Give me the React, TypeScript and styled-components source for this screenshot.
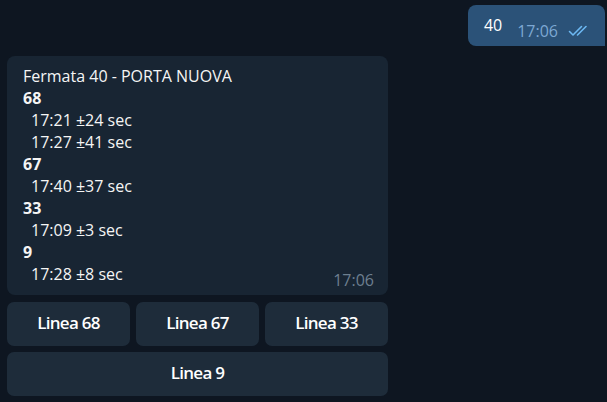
import React from "react";
import styled, { createGlobalStyle } from "styled-components";

const Global = createGlobalStyle`
  html, body { margin: 0; padding: 0; background: #0e1621; }
  body { font-family: "Open Sans", "Noto Sans", sans-serif; color: #f5f5f5; }
`;

const Page = styled.div`
  width: 607px;
  height: 402px;
  overflow: hidden;
  display: flex;
  flex-direction: column;
  padding-top: 5px;
  box-sizing: border-box;
`;

const OutRow = styled.div`
  display: flex;
  justify-content: flex-end;
  padding-right: 2px;
`;

const OutBubble = styled.div`
  background: #2b5278;
  border-radius: 8px 8px 0 8px;
  height: 41px;
  box-sizing: border-box;
  padding: 0 14px 0 16px;
  display: flex;
  align-items: center;
  gap: 15px;
`;

const OutText = styled.span`
  font-size: 16px;
  color: #ffffff;
  margin-top: -2px;
`;

const OutMeta = styled.span`
  display: flex;
  align-items: center;
  gap: 10px;
  font-size: 16px;
  color: #7da8d3;
  margin-top: 10px;
`;

const InBlock = styled.div`
  width: 381px;
  margin: 10px 0 0 7px;
  display: flex;
  flex-direction: column;
  gap: 7px;
`;

const InBubble = styled.div`
  background: #182533;
  border-radius: 8px;
  padding: 9px 14px 10px 16px;
  font-size: 16px;
  line-height: 22px;
  color: #f5f5f5;
`;

const Line = styled.div<{ $bold?: boolean; $indent?: boolean }>`
  font-weight: ${(p) => (p.$bold ? 700 : 400)};
  padding-left: ${(p) => (p.$indent ? "8px" : "0")};
  white-space: pre;
`;

const LastRow = styled.div`
  display: flex;
  justify-content: space-between;
  align-items: flex-start;
`;

const Time = styled.span`
  font-size: 16px;
  color: #6d7f8f;
  line-height: 22px;
  margin-top: 6px;
  margin-bottom: -6px;
`;

const ButtonGrid = styled.div`
  display: grid;
  grid-template-columns: repeat(3, 1fr);
  gap: 6px;
`;

const KeyButton = styled.div<{ $span?: number }>`
  grid-column: span ${(p) => p.$span ?? 1};
  height: 44px;
  box-sizing: border-box;
  padding-bottom: 3px;
  border-radius: 7px;
  background: #1e2c3a;
  display: flex;
  align-items: center;
  justify-content: center;
  font-size: 17px;
  font-weight: 600;
  letter-spacing: -0.7px;
  color: #ffffff;
`;

const Checks = () => (
  <svg width="23" height="12" viewBox="0 0 23 12" fill="none">
    <path d="M1.5 6.5 L5 10 L13.5 1.5" stroke="#6cb8f2" strokeWidth="1.6" strokeLinecap="round" strokeLinejoin="round" />
    <path d="M9.5 10 L18 1.5" stroke="#6cb8f2" strokeWidth="1.6" strokeLinecap="round" />
  </svg>
);

const lines: { t: string; bold?: boolean; indent?: boolean }[] = [
  { t: "Fermata 40 - PORTA NUOVA" },
  { t: "68", bold: true },
  { t: "17:21 ±24 sec", indent: true },
  { t: "17:27 ±41 sec", indent: true },
  { t: "67", bold: true },
  { t: "17:40 ±37 sec", indent: true },
  { t: "33", bold: true },
  { t: "17:09 ±3 sec", indent: true },
  { t: "9", bold: true },
];

export default function App() {
  return (
    <Page>
      <Global />
      <OutRow>
        <OutBubble>
          <OutText>40</OutText>
          <OutMeta>
            17:06
            <Checks />
          </OutMeta>
        </OutBubble>
      </OutRow>
      <InBlock>
        <InBubble>
          {lines.map((l, i) => (
            <Line key={i} $bold={l.bold} $indent={l.indent}>
              {l.t}
            </Line>
          ))}
          <LastRow>
            <Line $indent>17:28 ±8 sec</Line>
            <Time>17:06</Time>
          </LastRow>
        </InBubble>
        <ButtonGrid>
          <KeyButton>Linea 68</KeyButton>
          <KeyButton>Linea 67</KeyButton>
          <KeyButton>Linea 33</KeyButton>
          <KeyButton $span={3}>Linea 9</KeyButton>
        </ButtonGrid>
      </InBlock>
    </Page>
  );
}
